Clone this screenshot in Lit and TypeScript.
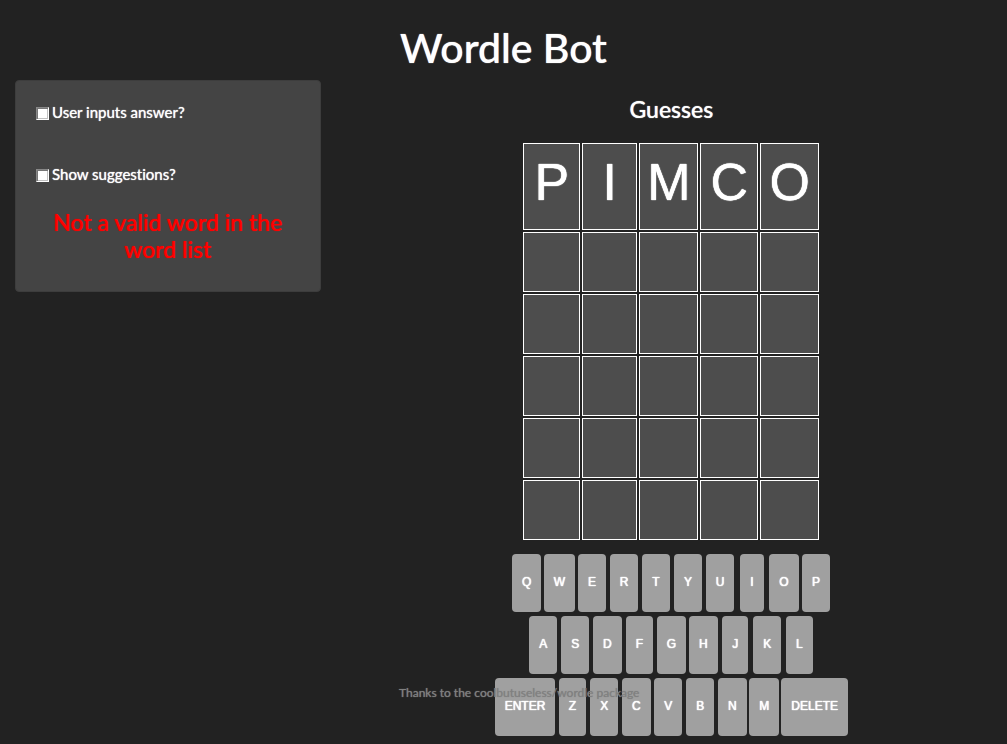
import { LitElement, html, css } from "lit";
import { customElement, property, state } from "lit/decorators.js";

const KEY_ROWS = [
  ["Q", "W", "E", "R", "T", "Y", "U", "I", "O", "P"],
  ["A", "S", "D", "F", "G", "H", "J", "K", "L"],
  ["Enter", "Z", "X", "C", "V", "B", "N", "M", "Delete"],
];
const ROWS = 6;
const COLUMNS = 5;

@customElement("options-panel")
export class OptionsPanel extends LitElement {
  @property() message = "";

  static styles = css`
    :host {
      display: block;
      padding: 20px;
      border: 1px solid #3d3d3d;
      border-radius: 4px;
      background: #444;
    }
    .option {
      display: flex;
      align-items: center;
      gap: 3px;
      height: 22px;
      margin-bottom: 40px;
      font-size: 15px;
      line-height: 22px;
      text-shadow: 0 0 1px;
    }
    .option + .option {
      margin-bottom: 24px;
    }
    .box {
      appearance: none;
      box-sizing: border-box;
      width: 13px;
      height: 13px;
      margin: 2px 0 0;
      border: 1px solid;
      border-color: #888 #fff #fff #888;
      background: #fff;
      box-shadow: inset 1px 1px #777, inset -1px -1px #c0c0c0;
    }
    .box:checked {
      background: #375a7f;
    }
    .message {
      margin: 0 0 8px;
      font-size: 23px;
      line-height: 27px;
      font-weight: 500;
      text-align: center;
      color: #f00;
      text-shadow: 0 0 1px;
    }
  `;

  render() {
    return html`
      <label class="option"><input class="box" type="checkbox" />User inputs answer?</label>
      <label class="option"><input class="box" type="checkbox" />Show suggestions?</label>
      <h3 class="message">${this.message}</h3>
    `;
  }
}

@customElement("guess-board")
export class GuessBoard extends LitElement {
  @property() word = "";

  static styles = css`
    :host {
      display: grid;
      grid-template-columns: 57px 55px 59px 58px 59px;
      grid-template-rows: 87px;
      grid-auto-rows: 60px;
      justify-content: center;
      gap: 2px;
    }
    .cell {
      box-sizing: border-box;
      padding-top: 8px;
      border: 1px solid #fff;
      background: #4d4d4d;
      font: 52px/60px "Liberation Sans", Arial, sans-serif;
      text-align: center;
      text-shadow: 0 0 1px, 0 0 1px;
    }
  `;

  render() {
    return Array.from(
      { length: ROWS * COLUMNS },
      (_, i) => html`<div class="cell">${this.word[i] ?? ""}</div>`
    );
  }
}

@customElement("letter-keyboard")
export class LetterKeyboard extends LitElement {
  static styles = css`
    :host {
      display: block;
    }
    .row {
      display: flex;
      justify-content: center;
    }
    .slot {
      display: flex;
      justify-content: center;
      box-sizing: border-box;
      min-width: 32px;
      padding: 2px 1px;
    }
    .key {
      height: 58px;
      padding: 0 10px 2px;
      border: 0;
      border-radius: 4px;
      background: #a0a0a0;
      color: #fff;
      font: 12px "Liberation Sans", Arial, sans-serif;
      text-shadow: 0 0 1px, 0 0 1px;
      text-transform: uppercase;
      cursor: pointer;
    }
  `;

  private press(key: string) {
    this.dispatchEvent(new CustomEvent("key-press", { detail: key }));
  }

  render() {
    return KEY_ROWS.map(
      (row) => html`<div class="row">
        ${row.map(
          (key) => html`<div class="slot">
            <button class="key" @click=${() => this.press(key)}>${key}</button>
          </div>`
        )}
      </div>`
    );
  }
}

@customElement("app-root")
export class AppRoot extends LitElement {
  @state() private word = "PIMCO";
  @state() private message = "Not a valid word in the word list";

  static styles = css`
    :host {
      display: block;
      position: relative;
      box-sizing: border-box;
      min-height: 100vh;
      padding: 24px 0 6px;
      background: #222;
      color: #fff;
      font-family: Lato, sans-serif;
      font-variant-ligatures: none;
    }
    .title {
      margin: 0 0 8px;
      font-size: 41px;
      line-height: 48px;
      font-weight: 500;
      text-align: center;
      text-shadow: 0 0 1px;
    }
    .columns {
      display: grid;
      grid-template-columns: 1fr 2fr;
      align-items: start;
    }
    .side {
      padding: 0 15px;
    }
    .subtitle {
      margin: 16px 0 20px;
      font-size: 23px;
      line-height: 27px;
      font-weight: 500;
      text-align: center;
      text-shadow: 0 0 1px;
    }
    .keys {
      margin-top: 12px;
    }
    .credit {
      position: absolute;
      left: 399px;
      bottom: 42px;
      margin: 0;
      font-size: 12px;
      line-height: 18px;
      color: #808080;
      text-shadow: 0 0 1px;
      pointer-events: none;
    }
  `;

  private onKey(event: CustomEvent<string>) {
    const key = event.detail;
    this.message = "";
    if (key === "Delete") {
      this.word = this.word.slice(0, -1);
    } else if (key !== "Enter" && this.word.length < COLUMNS) {
      this.word += key;
    }
  }

  render() {
    return html`
      <h1 class="title">Wordle Bot</h1>
      <div class="columns">
        <aside class="side">
          <options-panel .message=${this.message}></options-panel>
        </aside>
        <main>
          <h3 class="subtitle">Guesses</h3>
          <guess-board .word=${this.word}></guess-board>
          <letter-keyboard class="keys" @key-press=${this.onKey}></letter-keyboard>
        </main>
      </div>
      <p class="credit">Thanks to the coolbutuseless/wordle package</p>
    `;
  }
}
